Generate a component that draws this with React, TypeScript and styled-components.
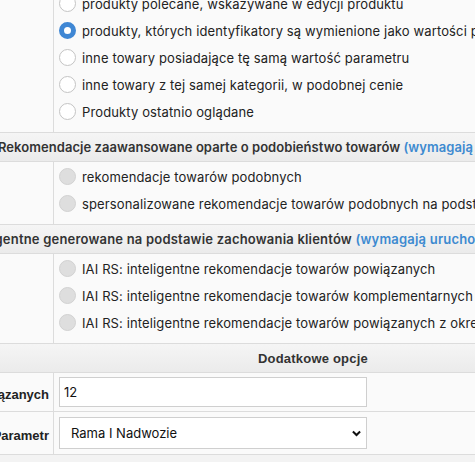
import * as React from 'react';
import styled, { createGlobalStyle, css } from 'styled-components';

const GlobalStyle = createGlobalStyle`
    html, body {
        margin: 0;
        padding: 0;
        background: #fafafa;
        overflow: hidden;
    }
    body {
        font-family: Inter, "Noto Sans", sans-serif;
        font-size: 13px;
        color: #222;
    }
`;

type RadioState = 'off' | 'on' | 'disabled';

const firstGroup: { label: string; state: RadioState }[] = [
    { label: 'produkty polecane, wskazywane w edycji produktu', state: 'off' },
    { label: 'produkty, których identyfikatory są wymienione jako wartości parametru', state: 'on' },
    { label: 'inne towary posiadające tę samą wartość parametru', state: 'off' },
    { label: 'inne towary z tej samej kategorii, w podobnej cenie', state: 'off' },
    { label: 'Produkty ostatnio oglądane', state: 'off' },
];

const similarGroup = [
    'rekomendacje towarów podobnych',
    'spersonalizowane rekomendacje towarów podobnych na podstawie historii klienta',
];

const iaiGroup = [
    'IAI RS: inteligentne rekomendacje towarów powiązanych',
    'IAI RS: inteligentne rekomendacje towarów komplementarnych',
    'IAI RS: inteligentne rekomendacje towarów powiązanych z określonym parametrem',
];

export default class App extends React.Component<{}, {}> {
    renderGroup(items: { label: string; state: RadioState }[], first?: boolean) {
        return (
            <Row $first={first}>
                <Side />
                <Options>
                    {items.map((item) => (
                        <Option key={item.label}>
                            <Radio $state={item.state} />
                            {item.label}
                        </Option>
                    ))}
                </Options>
            </Row>
        );
    }

    render() {
        return (
            <Page>
                <GlobalStyle />
                {this.renderGroup(firstGroup, true)}
                <Header>
                    <HeaderText $offset={-2} $spacing={0.05}>
                        Rekomendacje zaawansowane oparte o podobieństwo towarów{' '}
                        <Note>(wymagają uruchomienia modułu)</Note>
                    </HeaderText>
                </Header>
                {this.renderGroup(similarGroup.map((label) => ({ label, state: 'disabled' as RadioState })))}
                <Header>
                    <HeaderText $offset={-37} $spacing={0.2}>
                        inteligentne generowane na podstawie zachowania klientów{' '}
                        <Note>(wymagają uruchomienia modułu)</Note>
                    </HeaderText>
                </Header>
                {this.renderGroup(iaiGroup.map((label) => ({ label, state: 'disabled' as RadioState })))}
                <Header>
                    <OptionsTitle>Dodatkowe opcje</OptionsTitle>
                </Header>
                <FieldRow $height={38} $pad={4}>
                    <FieldLabel>Liczba towarów powiązanych</FieldLabel>
                    <Field>
                        <Input defaultValue="12" />
                    </Field>
                </FieldRow>
                <FieldRow $height={42} $pad={5}>
                    <FieldLabel>Parametr</FieldLabel>
                    <Field>
                        <SelectWrap>
                            <Select defaultValue="rama">
                                <option value="rama">Rama I Nadwozie</option>
                            </Select>
                            <Chevron viewBox="0 0 10 7">
                                <path d="M1 1.2 L5 5.2 L9 1.2" fill="none" stroke="#111" strokeWidth="2.2" />
                            </Chevron>
                        </SelectWrap>
                    </Field>
                </FieldRow>
                <Tail />
            </Page>
        );
    }
}

const Page = styled.div`
    width: 475px;
    height: 462px;
    overflow: hidden;
`;

const Row = styled.div<{ $first?: boolean }>`
    display: grid;
    grid-template-columns: 54px 1fr;
    border-bottom: 1px solid #dcdcdc;
    ${(p) => p.$first && css`margin-top: -11px;`}
`;

const Side = styled.div`
    border-right: 1px solid #dcdcdc;
`;

const Options = styled.div`
    padding: 1px 0 7px 5px;
    min-width: 0;
`;

const Option = styled.div`
    display: flex;
    align-items: center;
    gap: 6px;
    height: 27px;
    white-space: nowrap;
    letter-spacing: 0.13px;
    color: #222;
`;

const Radio = styled.span<{ $state: RadioState }>`
    flex: none;
    box-sizing: border-box;
    width: 17px;
    height: 17px;
    border-radius: 50%;
    background: #fff;
    border: 1px solid #c4c4c4;
    ${(p) => p.$state === 'on' && css`
        border: 5px solid #3f87d4;
    `}
    ${(p) => p.$state === 'disabled' && css`
        background: #dedede;
        border-color: #d2d2d2;
    `}
`;

const Header = styled.div`
    height: 28px;
    display: flex;
    align-items: center;
    border-bottom: 1px solid #dcdcdc;
    background: linear-gradient(#f5f5f5, #ebebeb);
    white-space: nowrap;
    overflow: hidden;
`;

const HeaderText = styled.span<{ $offset: number; $spacing: number }>`
    margin-left: ${(p) => p.$offset}px;
    letter-spacing: ${(p) => p.$spacing}px;
    font-weight: 600;
    color: #333;
`;

const Note = styled.span`
    color: #3d8ad0;
`;

const OptionsTitle = styled.span`
    margin-left: 258px;
    font-family: "Liberation Sans", Arial, sans-serif;
    font-weight: bold;
    letter-spacing: 0.2px;
    color: #333;
`;

const FieldRow = styled.div<{ $height: number; $pad: number }>`
    display: grid;
    grid-template-columns: 54px 1fr;
    height: ${(p) => p.$height}px;
    border-bottom: 1px solid #dcdcdc;
    & > div {
        padding-top: ${(p) => p.$pad}px;
    }
`;

const FieldLabel = styled.div`
    display: flex;
    align-items: center;
    justify-content: flex-end;
    padding-right: 4px;
    border-right: 1px solid #dcdcdc;
    white-space: nowrap;
    font-family: "Liberation Sans", Arial, sans-serif;
    font-weight: bold;
    color: #222;
`;

const Field = styled.div`
    padding-left: 5px;
`;

const Input = styled.input`
    box-sizing: border-box;
    width: 308px;
    height: 30px;
    border: 1px solid #cfcfcf;
    background: #fff;
    padding: 0 4px;
    font-family: Inter, sans-serif;
    font-size: 13px;
    color: #111;
    outline: none;
`;

const SelectWrap = styled.div`
    position: relative;
    width: 308px;
`;

const Select = styled.select`
    box-sizing: border-box;
    width: 308px;
    height: 32px;
    border: 1px solid #cfcfcf;
    border-radius: 0;
    background: #fff;
    padding: 0 0 0 11px;
    appearance: none;
    font-family: Inter, sans-serif;
    font-size: 13px;
    color: #111;
    outline: none;
`;

const Chevron = styled.svg`
    position: absolute;
    right: 6px;
    top: 13px;
    width: 9px;
    height: 7px;
    pointer-events: none;
`;

const Tail = styled.div`
    height: 10px;
    background: #f3f3f3;
`;
